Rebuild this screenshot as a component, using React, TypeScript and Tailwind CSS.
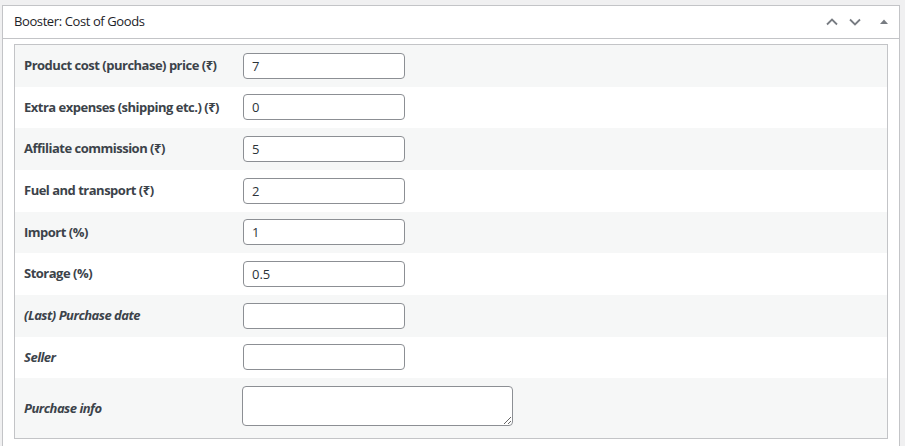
import React from "react";

const rows: { label: string; value?: string; italic?: boolean; textarea?: boolean }[] = [
  { label: "Product cost (purchase) price (₹)", value: "7" },
  { label: "Extra expenses (shipping etc.) (₹)", value: "0" },
  { label: "Affiliate commission (₹)", value: "5" },
  { label: "Fuel and transport (₹)", value: "2" },
  { label: "Import (%)", value: "1" },
  { label: "Storage (%)", value: "0.5" },
  { label: "(Last) Purchase date", value: "", italic: true },
  { label: "Seller", value: "", italic: true },
  { label: "Purchase info", italic: true, textarea: true },
];

export default function App() {
  return (
    <div
      className="h-[446px] w-[905px] overflow-hidden bg-[#f0f0f1] pt-[5px] pl-[2px] pr-[5px]"
      style={{ fontFamily: '"Open Sans", "Noto Sans", sans-serif' }}
    >
      <div className="border border-[#c3c4c7] bg-white pb-[12px]">
        <div className="flex h-[33px] items-center justify-between border-b border-[#c3c4c7] pl-[11px] pr-[8px]">
          <span className="text-[13px] tracking-[-0.4px] text-[#1d2327]">Booster: Cost of Goods</span>
          <div className="flex items-center gap-[9px] text-[#787c82]">
            <svg width="14" height="14" viewBox="0 0 14 14" fill="none" stroke="currentColor" strokeWidth="1.8">
              <path d="M2 9.5 L7 4.5 L12 9.5" />
            </svg>
            <svg width="14" height="14" viewBox="0 0 14 14" fill="none" stroke="currentColor" strokeWidth="1.8">
              <path d="M2 4.5 L7 9.5 L12 4.5" />
            </svg>
            <svg width="14" height="14" viewBox="0 0 14 14" className="ml-[6px]">
              <path d="M3 9 L7 4.5 L11 9 Z" fill="currentColor" />
            </svg>
          </div>
        </div>
        <div className="pt-[5px] pl-[11px] pr-[11px]">
          <div className="border border-[#c3c4c7]">
            {rows.map((r, i) => (
              <div
                key={i}
                className={`flex ${i % 2 === 0 ? "bg-[#f6f7f7]" : "bg-white"} ${
                  r.textarea ? "h-[59.3px] items-start pt-[8px]" : "h-[41.67px] items-center"
                }`}
              >
                <div
                  className={`w-[228px] shrink-0 pl-[9px] text-[13px] font-bold tracking-[-0.5px] text-[#3c434a] ${
                    r.italic ? "italic" : ""
                  } ${r.textarea ? "pt-[13px]" : ""}`}
                >
                  {r.label}
                </div>
                {r.textarea ? (
                  <textarea
                    className="h-[40px] w-[271px] rounded-[4px] border border-[#8c8f94] bg-white px-[8px] py-[4px] text-[13px] text-[#2c3338] outline-none"
                    style={{ marginLeft: -1 }}
                  />
                ) : (
                  <input
                    readOnly
                    value={r.value}
                    className="h-[26px] w-[162px] rounded-[4px] border border-[#8c8f94] bg-white px-[8px] text-[13px] text-[#2c3338] outline-none"
                  />
                )}
              </div>
            ))}
          </div>
        </div>
      </div>
    </div>
  );
}
